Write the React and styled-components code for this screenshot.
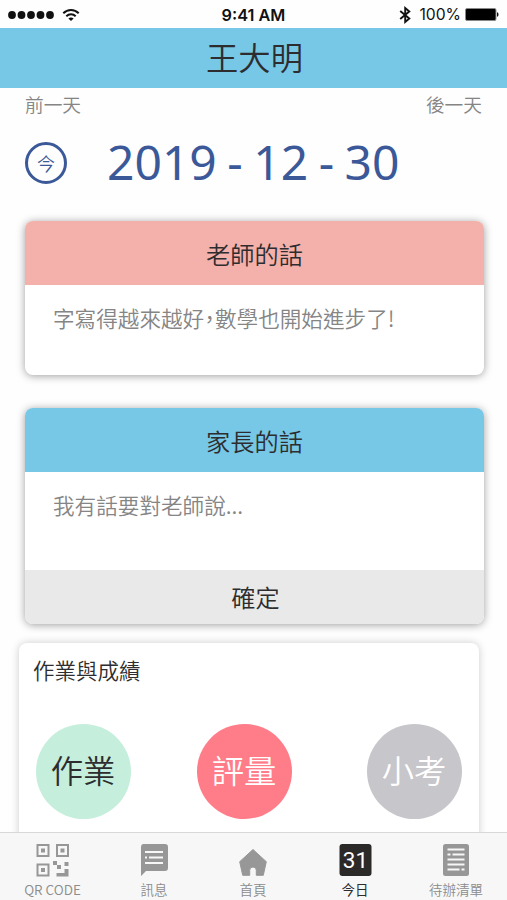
import styled, { createGlobalStyle } from "styled-components"

const GlobalStyle = createGlobalStyle`
    * {
        box-sizing: border-box;
    }
    body {
        margin: 0;
        background-color: #fefefe;
        font-family: 'Noto Sans CJK TC', 'Noto Sans', sans-serif;
        font-weight: 350;
        color: #2d2d2f;
    }
    button {
        font-family: inherit;
        font-weight: inherit;
        border: none;
        padding: 0;
        background: none;
    }
`

const Screen = styled.div`
    width: 507px;
    height: 900px;
    display: flex;
    flex-direction: column;
    overflow: hidden;
`

const StyledStatusBar = styled.div`
    flex: none;
    height: 28px;
    padding: 1px 8px 0 8px;
    display: grid;
    grid-template-columns: 1fr auto 1fr;
    align-items: center;
    font-family: Inter, sans-serif;
    font-weight: 400;
    color: #111;
    .signal {
        display: flex;
        align-items: center;
        gap: 8px;
    }
    .time {
        font-size: 16.3px;
        font-weight: 600;
    }
    .power {
        display: flex;
        align-items: center;
        justify-content: flex-end;
        font-size: 15.7px;
    }
    .percent {
        margin: 0 4px 0 8px;
    }
    svg {
        display: block;
    }
`

const Header = styled.header`
    flex: none;
    height: 60px;
    background-color: #77c7e6;
    font-size: 32.3px;
    line-height: 57px;
    text-align: center;
    padding-left: 2px;
`

const DayLinks = styled.div`
    flex: none;
    display: flex;
    justify-content: space-between;
    padding: 0 25px;
    height: 33px;
    font-size: 18.7px;
    line-height: 32px;
    color: #858585;
`

const DateRow = styled.div`
    flex: none;
    display: flex;
    align-items: center;
    height: 84px;
    padding: 0 25px;
    color: #3b5998;
`

const TodayButton = styled.button`
    width: 42px;
    height: 42px;
    border: 3px solid #3b5998;
    border-radius: 50%;
    color: #3b5998;
    font-size: 18px;
    line-height: 35px;
`

const DateText = styled.div`
    margin-left: 40px;
    font-family: 'Noto Sans', sans-serif;
    font-weight: 400;
    font-size: 48px;
    line-height: 82px;
    word-spacing: -2px;
    height: 84px;
    white-space: nowrap;
`

const Content = styled.main`
    flex: 1;
    min-height: 0;
    overflow: hidden;
    padding: 16px 23px 0 25px;
`

const StyledCard = styled.section`
    border-radius: 8px;
    overflow: hidden;
    background-color: #fff;
    box-shadow: 0 1px 9px rgba(0, 0, 0, 0.38);
    margin-bottom: 33px;
    .card-title {
        height: 64px;
        background-color: ${(props) => props.$color};
        font-size: 24.2px;
        line-height: 66px;
        text-align: center;
    }
    .card-text {
        height: ${(props) => props.$height}px;
        padding: 16px 28px;
        font-size: 21.6px;
        line-height: 34px;
        color: #858585;
        white-space: nowrap;
    }
    .comma {
        font-feature-settings: 'halt';
    }
`

const ConfirmButton = styled.button`
    display: block;
    width: 100%;
    height: 54px;
    padding-left: 2px;
    background-color: #e9e9e9;
    color: #2d2d2f;
    font-size: 24.2px;
    line-height: 54px;
`

const ScorePanel = styled.section`
    height: 260px;
    margin: -14px 5px 0 -6px;
    padding: 10px 17px 0 14px;
    border-radius: 8px;
    background-color: #fff;
    box-shadow: 0 0 9px rgba(0, 0, 0, 0.2);
    .panel-title {
        font-size: 21.5px;
        line-height: 33px;
    }
    .scores {
        display: flex;
        margin: 38px 0 0 2.5px;
    }
`

const ScoreCircle = styled.button`
    flex: none;
    width: 95px;
    height: 95px;
    border-radius: 50%;
    background-color: ${(props) => props.$color};
    color: ${(props) => props.$text};
    font-size: 32.3px;
    line-height: 90px;
    padding-bottom: 5px;
    & + & {
        margin-left: 66px;
    }
    & + & + & {
        margin-left: 75px;
    }
`

const TabBar = styled.nav`
    flex: none;
    height: 68px;
    display: grid;
    grid-template-columns: 105px 98px 100px 104px 98px;
    border-top: 1px solid #d9d9d9;
    background-color: #f7f7f7;
`

const StyledTab = styled.div`
    display: flex;
    flex-direction: column;
    align-items: center;
    padding-top: 10px;
    font-size: 13.5px;
    font-weight: ${(props) => (props.$active ? 400 : 350)};
    line-height: 20px;
    white-space: nowrap;
    color: ${(props) => (props.$active ? "#2d2d2f" : "#8c8c8c")};
    svg {
        display: block;
        height: 34px;
        margin-bottom: 2px;
    }
`

const WifiIcon = () => (
    <svg width="18" height="14" viewBox="0 0 18 14" fill="none" stroke="#111" strokeWidth="2">
        <path d="M1.3 5.2C5.6.9 12.4.9 16.7 5.2" />
        <path d="M4.3 8.2c2.7-2.6 6.7-2.6 9.4 0" />
        <path d="M9 13 6.4 10.4c1.5-1.3 3.7-1.3 5.2 0z" fill="#111" stroke="none" />
    </svg>
)

const SignalIcon = () => (
    <svg width="46" height="8" viewBox="0 0 46 8" fill="#111">
        {[4, 13.5, 23, 32.5, 42].map((x) => (
            <circle key={x} cx={x} cy="4" r="3.9" />
        ))}
    </svg>
)

const BluetoothIcon = () => (
    <svg width="12" height="18" viewBox="0 0 12 18" fill="none" stroke="#111" strokeWidth="1.9">
        <path d="M1.2 5 10.3 12.6 6.2 16V2L10.3 5.4 1.2 13" />
    </svg>
)

const BatteryIcon = () => (
    <svg width="34" height="13" viewBox="0 0 34 13">
        <rect x=".5" y=".5" width="30.5" height="12" rx="1.5" fill="#000" stroke="#888" />
        <path d="M32 4.2c2 .3 2 4.3 0 4.6z" fill="#111" />
    </svg>
)

const QrIcon = () => (
    <svg width="34" height="34" viewBox="0 0 34 34" fill="#979797">
        <g fill="none" stroke="#979797" strokeWidth="2">
            <path d="M1.5 2h11v11h-11zM21 2h11v11H21zM1.5 21.5h11v11h-11z" />
        </g>
        <path d="M5 5.5h4v4H5zM24.5 5.5h4v4h-4zM5 25h4v4H5z" />
        <path d="M17 18h4v4h-4zM21 22h4v4h-4zM28.5 19h4v4h-4zM28.5 26h4v7.5h-12V30h8z" />
    </svg>
)

const MessageIcon = () => (
    <svg width="28" height="34" viewBox="0 0 28 34">
        <path d="M3 1h22a3 3 0 0 1 3 3v21a3 3 0 0 1-3 3H6l-5 5V4a3 3 0 0 1 2-3z" fill="#979797" />
        <path d="M5 9h18M5 14.5h2M9 14.5h14M5 20h18" stroke="#f7f7f7" strokeWidth="1.9" />
    </svg>
)

const HomeIcon = () => (
    <svg width="30" height="34" viewBox="0 0 30 34">
        <path
            d="M15 6.5 28.3 18.7 25.3 32.3h-7v-5a3.3 3.3 0 0 0-6.6 0v5h-7L1.7 18.7z"
            fill="#979797"
            stroke="#979797"
            strokeLinejoin="round"
        />
    </svg>
)

const CalendarIcon = () => (
    <svg width="33" height="34" viewBox="0 0 33 34">
        <rect x=".5" y="1" width="32" height="32" rx="3" fill="#2b2a28" />
        <text x="16.5" y="25" textAnchor="middle" fontFamily="Roboto" fontWeight="400" fontSize="22.5" fill="#fff">
            31
        </text>
    </svg>
)

const ListIcon = () => (
    <svg width="26" height="34" viewBox="0 0 26 34">
        <rect y="1" width="26" height="32" rx="2.5" fill="#979797" />
        <path
            d="M4.5 6.5h17M4.5 11.5h3M9.5 11.5h12M4.5 16.5h17M4.5 21.5h17M4.5 26.5h12M18.5 26.5h3"
            stroke="#f7f7f7"
            strokeWidth="1.8"
        />
    </svg>
)

const StatusBar = () => {
    return (
        <StyledStatusBar>
            <div className="signal">
                <SignalIcon />
                <WifiIcon />
            </div>
            <div className="time">9:41 AM</div>
            <div className="power">
                <BluetoothIcon />
                <span className="percent">100%</span>
                <BatteryIcon />
            </div>
        </StyledStatusBar>
    )
}

const Card = ({ title, color, height, children, footer }) => {
    return (
        <StyledCard $color={color} $height={height}>
            <div className="card-title">{title}</div>
            <div className="card-text">{children}</div>
            {footer}
        </StyledCard>
    )
}

const Tab = ({ text, icon, active }) => {
    return (
        <StyledTab $active={active}>
            {icon}
            <span>{text}</span>
        </StyledTab>
    )
}

const App = () => {
    return (
        <Screen lang="zh-Hant">
            <GlobalStyle />
            <StatusBar />
            <Header>王大明</Header>
            <DayLinks>
                <span>前一天</span>
                <span>後一天</span>
            </DayLinks>
            <DateRow>
                <TodayButton>今</TodayButton>
                <DateText>2019 - 12 - 30</DateText>
            </DateRow>
            <Content>
                <Card title="老師的話" color="#f4b0ab" height={90}>
                    字寫得越來越好<span className="comma">，</span>數學也開始進步了!
                </Card>
                <Card title="家長的話" color="#77c7e6" height={98} footer={<ConfirmButton>確定</ConfirmButton>}>
                    我有話要對老師說...
                </Card>
                <ScorePanel>
                    <div className="panel-title">作業與成績</div>
                    <div className="scores">
                        <ScoreCircle $color="#c5efdc" $text="#2d2d2f">作業</ScoreCircle>
                        <ScoreCircle $color="#ff7c89" $text="#fff">評量</ScoreCircle>
                        <ScoreCircle $color="#c7c6cb" $text="#fff">小考</ScoreCircle>
                    </div>
                </ScorePanel>
            </Content>
            <TabBar>
                <Tab text="QR CODE" icon={<QrIcon />} />
                <Tab text="訊息" icon={<MessageIcon />} />
                <Tab text="首頁" icon={<HomeIcon />} />
                <Tab text="今日" icon={<CalendarIcon />} active />
                <Tab text="待辦清單" icon={<ListIcon />} />
            </TabBar>
        </Screen>
    )
}

export default App
